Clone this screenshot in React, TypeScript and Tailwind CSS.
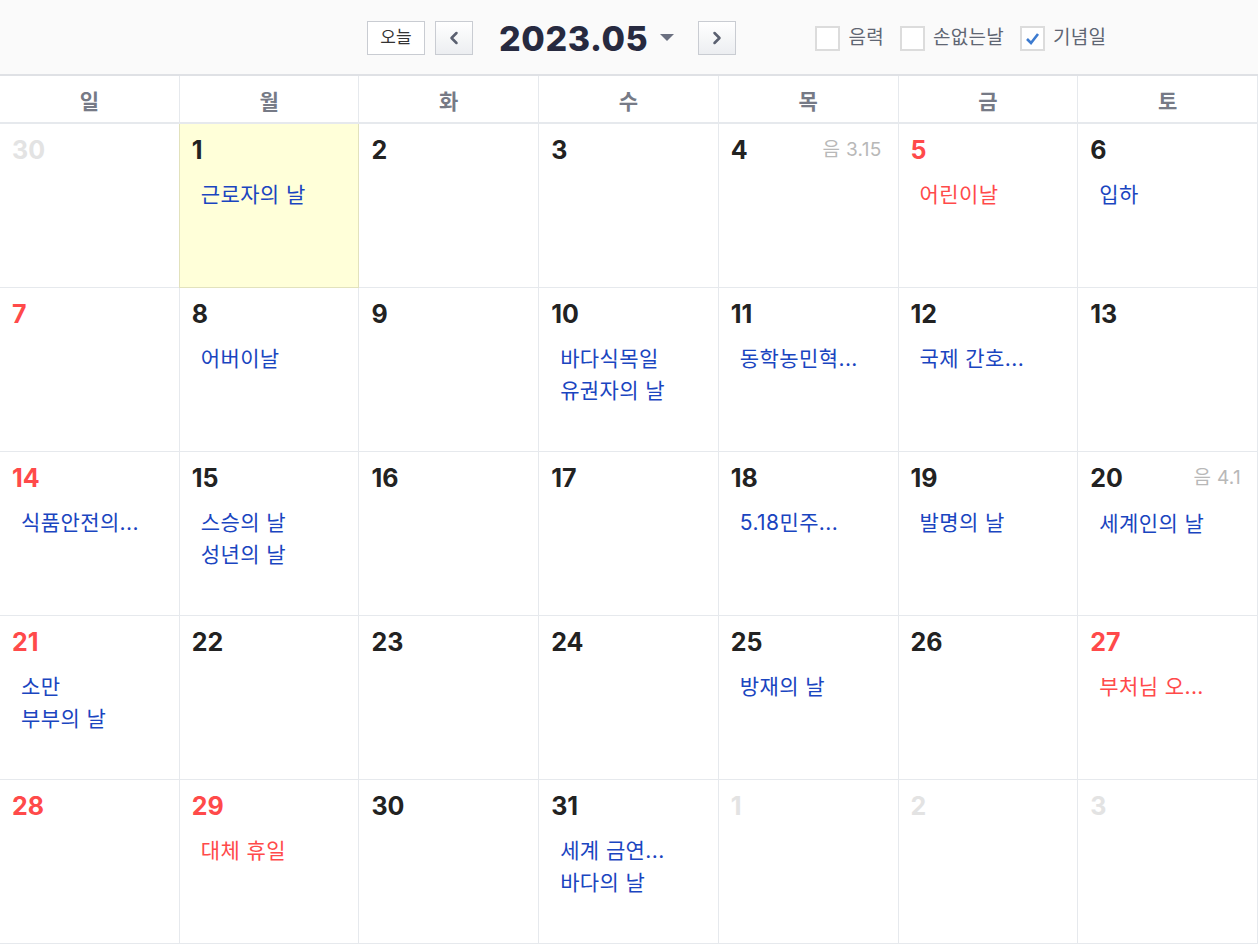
import { ChevronLeft, ChevronRight } from 'lucide-react'

type Ev = { text: string; red?: boolean }
type Day = {
  n: number
  tone: 'dim' | 'red' | 'dark'
  lunar?: string
  today?: boolean
  events?: Ev[]
}

const WEEKDAYS = ['일', '월', '화', '수', '목', '금', '토']

const WEEKS: Day[][] = [
  [
    { n: 30, tone: 'dim' },
    { n: 1, tone: 'dark', today: true, events: [{ text: '근로자의 날' }] },
    { n: 2, tone: 'dark' },
    { n: 3, tone: 'dark' },
    { n: 4, tone: 'dark', lunar: '3.15' },
    { n: 5, tone: 'red', events: [{ text: '어린이날', red: true }] },
    { n: 6, tone: 'dark', events: [{ text: '입하' }] },
  ],
  [
    { n: 7, tone: 'red' },
    { n: 8, tone: 'dark', events: [{ text: '어버이날' }] },
    { n: 9, tone: 'dark' },
    { n: 10, tone: 'dark', events: [{ text: '바다식목일' }, { text: '유권자의 날' }] },
    { n: 11, tone: 'dark', events: [{ text: '동학농민혁...' }] },
    { n: 12, tone: 'dark', events: [{ text: '국제 간호...' }] },
    { n: 13, tone: 'dark' },
  ],
  [
    { n: 14, tone: 'red', events: [{ text: '식품안전의...' }] },
    { n: 15, tone: 'dark', events: [{ text: '스승의 날' }, { text: '성년의 날' }] },
    { n: 16, tone: 'dark' },
    { n: 17, tone: 'dark' },
    { n: 18, tone: 'dark', events: [{ text: '5.18민주...' }] },
    { n: 19, tone: 'dark', events: [{ text: '발명의 날' }] },
    { n: 20, tone: 'dark', lunar: '4.1', events: [{ text: '세계인의 날' }] },
  ],
  [
    { n: 21, tone: 'red', events: [{ text: '소만' }, { text: '부부의 날' }] },
    { n: 22, tone: 'dark' },
    { n: 23, tone: 'dark' },
    { n: 24, tone: 'dark' },
    { n: 25, tone: 'dark', events: [{ text: '방재의 날' }] },
    { n: 26, tone: 'dark' },
    { n: 27, tone: 'red', events: [{ text: '부처님 오...', red: true }] },
  ],
  [
    { n: 28, tone: 'red' },
    { n: 29, tone: 'red', events: [{ text: '대체 휴일', red: true }] },
    { n: 30, tone: 'dark' },
    { n: 31, tone: 'dark', events: [{ text: '세계 금연...' }, { text: '바다의 날' }] },
    { n: 1, tone: 'dim' },
    { n: 2, tone: 'dim' },
    { n: 3, tone: 'dim' },
  ],
]

const toneClass = {
  dim: 'text-[#e3e3e3]',
  red: 'text-[#ff4a4a]',
  dark: 'text-[#222222]',
}

function Check({ label, checked }: { label: string; checked?: boolean }) {
  return (
    <label className="flex items-center gap-2 text-[19px] tracking-[0.3px] text-[#5f6673]">
      <span className="flex h-[25px] w-[25px] items-center justify-center border-2 border-[#dcdcdc] bg-white">
        {checked && (
          <svg width="15" height="13" viewBox="0 0 15 13">
            <path d="M2 7l4 4 7-9" fill="none" stroke="#3d7bd0" strokeWidth="2.6" />
          </svg>
        )}
      </span>
      {label}
    </label>
  )
}

function NavButton({ children }: { children: React.ReactNode }) {
  return (
    <button className="flex h-[34px] w-[38px] items-center justify-center border border-[#c9ccd2] bg-gradient-to-b from-white to-[#eceef1] text-[#5a6070]">
      {children}
    </button>
  )
}

function DayCell({ day }: { day: Day }) {
  return (
    <div
      className={
        day.today
          ? 'h-[164px] border-r border-b border-r-[#e2e2bd] border-b-[#e2e2bd] border-l border-l-[#e2e2bd] -ml-px bg-[#ffffd9] px-[12px] pt-[12px]'
          : 'h-[164px] border-r border-b border-[#e6e9ed] bg-white px-[12px] pt-[12px]'
      }
    >
      <div className="flex items-center justify-between">
        <span className={`text-[25px] font-bold leading-[28px] ${toneClass[day.tone]}`}>{day.n}</span>
        {day.lunar && (
          <span className="pr-[4px] text-[19px] tracking-[0.3px] text-[#b8b8b8]">음 {day.lunar}</span>
        )}
      </div>
      <div className="mt-[15px] pl-[9px]">
        {day.events?.map((ev) => (
          <div
            key={ev.text}
            className={`text-[21px] leading-[32px] tracking-[0.4px] whitespace-nowrap ${ev.red ? 'text-[#ff4a4a]' : 'text-[#1a45c0]'}`}
          >
            {ev.text}
          </div>
        ))}
      </div>
    </div>
  )
}

export default function App() {
  return (
    <div
      className="w-[1258px] bg-white"
      style={{ fontFamily: 'Inter, "Noto Sans CJK KR", sans-serif' }}
    >
      <div className="flex h-[76px] items-center border-b-2 border-[#dfe1e5] bg-[#fafafa] pl-[367px] pt-[2px]">
        <button className="flex h-[34px] w-[58px] items-center justify-center border border-[#c9ccd2] bg-white text-[17px] text-[#333]">
          오늘
        </button>
        <div className="ml-[10px]">
          <NavButton>
            <ChevronLeft size={20} strokeWidth={3} />
          </NavButton>
        </div>
        <div className="ml-[26px] flex items-center">
          <span className="text-[34px] font-extrabold tracking-[0.6px] text-[#272a40]">2023.05</span>
          <svg className="ml-[12px]" width="14" height="8" viewBox="0 0 14 8">
            <path d="M0 0h14L7 7z" fill="#6b7080" />
          </svg>
        </div>
        <div className="ml-[24px]">
          <NavButton>
            <ChevronRight size={20} strokeWidth={3} />
          </NavButton>
        </div>
        <div className="ml-[79px] flex items-center gap-[16px]">
          <Check label="음력" />
          <Check label="손없는날" />
          <Check label="기념일" checked />
        </div>
      </div>

      <div className="grid grid-cols-7">
        {WEEKDAYS.map((w) => (
          <div
            key={w}
            className="flex h-[48px] items-center justify-center border-r border-b-2 border-[#e6e9ed] pt-[5px] text-[21px] font-bold text-[#767a86]"
          >
            {w}
          </div>
        ))}
      </div>

      <div className="grid grid-cols-7">
        {WEEKS.flat().map((d, i) => (
          <DayCell key={i} day={d} />
        ))}
      </div>
    </div>
  )
}
